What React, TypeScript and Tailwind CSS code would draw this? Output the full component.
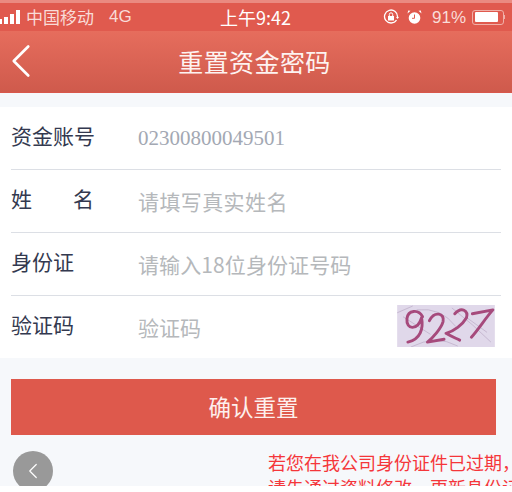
import { ChevronLeft } from 'lucide-react';

const cjk = { fontFamily: '"Noto Sans CJK SC", sans-serif' };

function Row({ label, spaced, children }: { label: string; spaced?: boolean; children: React.ReactNode }) {
  return (
    <div className="flex h-[63px] last:h-[62px] items-center border-b border-[#dcdfe5] last:border-b-0 mx-[11px]">
      {spaced ? (
        <div className="flex w-[83px] mr-[44px] mb-[5px] justify-between text-[21px] leading-none text-[#33394f]">
          <span>姓</span>
          <span>名</span>
        </div>
      ) : (
        <div className="w-[127px] mb-[5px] text-[21px] leading-none text-[#33394f]">{label}</div>
      )}
      {children}
    </div>
  );
}

function Captcha() {
  return (
    <svg width="100" height="42" viewBox="0 0 100 43" className="rounded-[1px]">
      <rect width="100" height="43" fill="#e0d8ea" />
      <g fill="none" stroke="#bfafc9" strokeWidth="0.8">
        <path d="M0 8 L16 1 M6 12 L34 30 M20 5 Q45 2 60 22 M56 3 Q78 20 96 38 M14 43 Q40 30 62 42 M70 12 L92 28" />
      </g>
      <g fill="none" stroke="#a64a7c" strokeWidth="3" strokeLinecap="round" strokeLinejoin="round">
        <path d="M26 12 C22 4 11 5 10 14 C9 26 21 26 25 13 C27 24 24 35 11 38" />
        <path d="M33 16 C38 6 49 8 47 17 C45 24 37 33 31 38 L48 35" />
        <path d="M59 9 C66 1 73 6 71 13 C67 20 58 27 50 29 C55 32 60 34 64 36" />
        <path d="M77 9 L98 5 C90 14 84 24 76 33" />
      </g>
    </svg>
  );
}

export default function App() {
  return (
    <div className="w-[512px] h-[492px] bg-white overflow-hidden" style={cjk}>
      <div className="h-[486px] overflow-hidden bg-[#f6f8fb]">
        <div className="relative h-[31px] bg-[#e05a4e] border-t-[3px] border-[#ea8a80] flex items-center justify-between text-white pr-[7px]">
          <div className="flex items-center w-[180px]">
            <div className="flex items-end gap-[2px] h-[14px] -ml-[1px]">
              <span className="w-[3px] h-[5px] bg-white" />
              <span className="w-[4px] h-[7px] bg-white" />
              <span className="w-[4px] h-[10px] bg-white" />
              <span className="w-[4px] h-[14px] bg-white" />
            </div>
            <span className="ml-[6px] text-[17px] text-[#f9dcd8]">中国移动</span>
            <span className="ml-[15px] text-[17px] text-[#f9dcd8]" style={{ fontFamily: '"Liberation Sans", sans-serif' }}>4G</span>
          </div>
          <span className="absolute left-[220px] top-0 text-[18px] leading-[28px]">上午9:42</span>
          <div className="flex items-center justify-end gap-[9px]">
            <svg width="16" height="16" viewBox="0 0 16 16" fill="none" stroke="white">
              <path d="M13.5 11 A6.5 6.5 0 1 1 14.5 8" strokeWidth="1.3" />
              <path d="M13 8 L16 8 L14.5 10 Z" fill="white" stroke="none" />
              <rect x="5" y="7" width="6" height="4.5" fill="white" stroke="none" />
              <path d="M6.3 7 V5.5 a1.7 1.7 0 0 1 3.4 0 V7" strokeWidth="1" />
            </svg>
            <svg width="15" height="15" viewBox="0 0 15 15" fill="white" className="-ml-[1px] mr-[1px]">
              <circle cx="7.5" cy="8" r="5.8" />
              <path d="M0.5 3.5 L3.5 0.8 L1.2 0.5 Z M14.5 3.5 L11.5 0.8 L13.8 0.5 Z" />
              <path d="M7.5 4.5 V8.3 H5" stroke="#e05a4e" fill="none" strokeWidth="1" />
            </svg>
            <span className="text-[#f9dcd8] text-[17px] leading-none" style={{ fontFamily: '"Liberation Sans", sans-serif' }}>91%</span>
            <div className="flex items-center -ml-[3px]">
              <div className="w-[32px] h-[15px] rounded-[3px] border border-[#f0b0a8] p-[1.5px]">
                <div className="h-full w-[88%] bg-white rounded-[1px]" />
              </div>
              <span className="w-[1px] h-[4px] bg-[#f0b0a8]" />
            </div>
          </div>
        </div>

        <div className="relative h-[62px] bg-gradient-to-b from-[#e66d5d] to-[#cf5a4c] border-b border-[#d9574b] flex items-center justify-center">
          <ChevronLeft className="absolute left-[-8px] top-[1px] text-white" size={58} strokeWidth={1.1} />
          <h1 className="text-[25px] leading-none text-[#fdf3f1] tracking-[0.4px] -ml-[3px]">重置资金密码</h1>
        </div>

        <div className="mt-[14px] bg-white">
          <Row label="资金账号">
            <span className="mt-[2px] text-[21px] text-[#a3a8b3]" style={{ fontFamily: '"Liberation Serif", serif' }}>
              02300800049501
            </span>
          </Row>
          <Row label="姓名" spaced>
            <span className="mt-[2px] text-[21px] tracking-[0.4px] text-[#b5b8bb]">请填写真实姓名</span>
          </Row>
          <Row label="身份证">
            <span className="mt-[2px] text-[21px] tracking-[0.1px] text-[#b5b8bb]">请输入18位身份证号码</span>
          </Row>
          <Row label="验证码">
            <span className="mt-[2px] text-[21px] text-[#b5b8bb] flex-1">验证码</span>
            <div className="mr-[5px] mb-[2px] flex">
              <Captcha />
            </div>
          </Row>
        </div>

        <button
          type="button"
          className="mt-[21px] mx-[11px] w-[485px] h-[56px] bg-[#de594c] text-[22.5px] text-[#fdf0ee] flex items-center justify-center"
        >
          确认重置
        </button>

        <div className="mt-[16px] flex justify-between pl-[13px]">
          <div className="w-[40px] h-[40px] rounded-full bg-[#999999] flex items-center justify-center">
            <ChevronLeft className="text-white" size={26} strokeWidth={1.1} />
          </div>
          <p className="w-[244px] -mt-[1px] text-[#f5363a] text-[18px] leading-[25px] whitespace-nowrap">
            若您在我公司身份证件已过期，
            <br />
            请先通过资料修改，更新身份证
          </p>
        </div>
      </div>
    </div>
  );
}
